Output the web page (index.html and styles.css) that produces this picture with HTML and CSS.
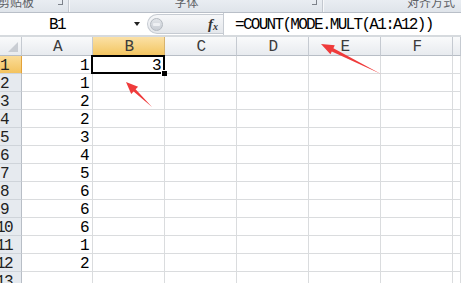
FILE: index.html
```html
<!DOCTYPE html>
<html>
<head>
    <title>Sheet1</title>
    <link rel="stylesheet" href="styles.css">
</head>
<body>
    <div class="ribbon">
        <div class="group group-clip"><span class="group-name">剪贴板</span><span class="launcher"></span></div>
        <div class="group group-font"><span class="group-name">字体</span><span class="launcher"></span></div>
        <div class="group group-align"><span class="group-name">对齐方式</span></div>
    </div>

    <div class="formula-bar">
        <div class="name-box">
            <span class="name">B1</span>
            <span class="drop"></span>
        </div>
        <div class="fx-area">
            <span class="grip"></span>
            <span class="fx">f<sub>x</sub></span>
        </div>
        <div class="formula">=COUNT(MODE.MULT(A1:A12))</div>
    </div>

    <div class="sheet" id="sheet">
        <div class="corner"></div>
        <div class="col-head">A</div>
        <div class="col-head active">B</div>
        <div class="col-head">C</div>
        <div class="col-head">D</div>
        <div class="col-head">E</div>
        <div class="col-head">F</div>
        <div class="col-head"></div>
    </div>

    <svg class="marks" width="461" height="283">
        <polygon points="381,74 333.4,48.2 334.8,45.3 321,44 330.4,54.3 331.8,51.4" />
        <polygon points="152,107 135.6,89.2 138.1,86.7 126,82 131.2,93.9 133.6,91.4" />
    </svg>

    <script>
        const values = [1, 1, 2, 2, 3, 4, 5, 6, 6, 6, 1, 2, ""];
        const sheet = document.getElementById("sheet");

        values.forEach(function (v, i) {
            const head = document.createElement("div");
            head.className = "row-head" + (i === 0 ? " active" : "");
            head.innerHTML = "<span>" + (i + 1) + "</span>";
            sheet.appendChild(head);

            for (let c = 0; c < 7; c++) {
                const cell = document.createElement("div");
                cell.className = "cell";
                if (c === 0) cell.textContent = v;
                if (c === 1 && i === 0) {
                    cell.textContent = 3;
                    cell.className = "cell selected";
                }
                sheet.appendChild(cell);
            }
        });
    </script>
</body>
</html>
```

FILE: styles.css
```css
body {
    margin: 0;
    width: 461px;
    height: 283px;
    overflow: hidden;
    position: relative;
    background-color: #ffffff;
    font-family: "Liberation Mono", monospace;
}

.ribbon {
    display: flex;
    height: 12px;
    overflow: hidden;
    background: linear-gradient(#e9edf2, #dfe4ea);
    border-bottom: 1px solid #b9bfc8;
}

.group {
    position: relative;
    display: flex;
    justify-content: center;
    border-right: 1px solid #c3c8cf;
    box-shadow: 1px 0 0 #f7f8fa;
    font-family: "Noto Sans CJK SC", sans-serif;
    font-size: 12px;
    color: #5e6166;
}

.group-name {
    line-height: 12px;
    margin-top: -4px;
    white-space: nowrap;
}

.group-clip {
    width: 68px;
    justify-content: flex-start;
}

.group-clip .group-name {
    margin-left: -2px;
}

.group-font {
    width: 253px;
}

.group-font .group-name {
    margin-right: 18px;
}

.group-align {
    flex: 1;
    justify-content: flex-start;
    border-right: none;
    box-shadow: none;
}

.group-align .group-name {
    margin-left: 84px;
}

.launcher {
    position: absolute;
    right: 5px;
    top: 0;
    width: 4px;
    height: 4px;
    border-right: 1px solid #7d828a;
    border-bottom: 1px solid #7d828a;
}

.formula-bar {
    display: flex;
    height: 22px;
    border-bottom: 2px solid #d6dade;
    background-color: #ffffff;
}

.name-box {
    width: 147px;
    display: flex;
    align-items: center;
}

.name {
    width: 130px;
    text-align: center;
    font-size: 16px;
    letter-spacing: -1.5px;
    margin-left: -8px;
    margin-top: 2px;
    color: #000;
}

.drop {
    width: 0;
    height: 0;
    margin-left: 12px;
    border-left: 3px solid transparent;
    border-right: 3px solid transparent;
    border-top: 4px solid #222;
}

.fx-area {
    width: 75px;
    margin: 1px 0;
    display: flex;
    align-items: center;
    border: 1px solid #c6cbd2;
    border-right: none;
    border-radius: 10px 0 0 10px;
    background: linear-gradient(#f6f7f9, #e4e7eb);
}

.grip {
    width: 11px;
    height: 11px;
    margin-left: 2px;
    border-radius: 50%;
    border: 1px solid #b4b9c0;
    background: linear-gradient(#e2e5e9, #c9ced5);
    position: relative;
}

.grip::after {
    content: "";
    position: absolute;
    left: 2px;
    right: 2px;
    top: 4px;
    height: 3px;
    background-color: #eef0f3;
    border-radius: 1px;
}

.fx {
    margin-left: 45px;
    font-family: "Liberation Serif", serif;
    font-style: italic;
    font-weight: bold;
    font-size: 15px;
    color: #333;
}

.fx sub {
    font-size: 10px;
    vertical-align: -1px;
}

.formula {
    flex: 1;
    border-left: 1px solid #c6cbd2;
    padding-left: 11px;
    font-size: 16px;
    letter-spacing: -1.7px;
    line-height: 24px;
    white-space: nowrap;
    color: #000;
}

.sheet {
    display: grid;
    grid-template-columns: 22px 71px repeat(5, 72px) 1fr;
    grid-template-rows: 19px;
    grid-auto-rows: 18px;
    font-size: 16px;
    letter-spacing: -1.7px;
}

.corner,
.col-head {
    box-sizing: border-box;
    border-right: 1px solid #c5cad1;
    border-bottom: 1px solid #b8bec6;
    background: linear-gradient(#f9fafb, #e8ebef);
}

.corner {
    position: relative;
}

.corner::after {
    content: "";
    position: absolute;
    right: 3px;
    bottom: 3px;
    width: 0;
    height: 0;
    border-left: 10px solid transparent;
    border-bottom: 10px solid #c9cdd3;
}

.col-head {
    text-align: center;
    line-height: 20px;
    color: #3c3c3c;
}

.col-head.active {
    background: linear-gradient(#fbe1a6, #f3c561);
    border-bottom-color: #e3a23a;
    border-right-color: #d7b36e;
}

.row-head {
    box-sizing: border-box;
    display: flex;
    justify-content: center;
    padding-right: 13px;
    border-right: 1px solid #b8bec6;
    border-bottom: 1px solid #cfd4da;
    background-color: #e6eaef;
    line-height: 20px;
    color: #222;
    white-space: nowrap;
    overflow: hidden;
}

.row-head span {
    flex-shrink: 0;
}

.row-head.active {
    background: linear-gradient(#fbdc98, #f3c35e);
    border-right-color: #e3a23a;
}

.cell {
    box-sizing: border-box;
    border-right: 1px solid #dadcde;
    border-bottom: 1px solid #dadcde;
    text-align: right;
    padding-right: 4px;
    line-height: 20px;
    color: #000;
}

.selected {
    position: relative;
}

.selected::before {
    content: "";
    position: absolute;
    left: -2px;
    top: -1px;
    right: -1px;
    bottom: -1px;
    border: 2px solid #000;
}

.selected::after {
    content: "";
    position: absolute;
    right: -3px;
    bottom: -3px;
    width: 5px;
    height: 5px;
    background-color: #000;
    border-left: 1px solid #fff;
    border-top: 1px solid #fff;
}

.marks {
    position: absolute;
    left: 0;
    top: 0;
    pointer-events: none;
}

.marks polygon {
    fill: #ef3b3b;
}
```
